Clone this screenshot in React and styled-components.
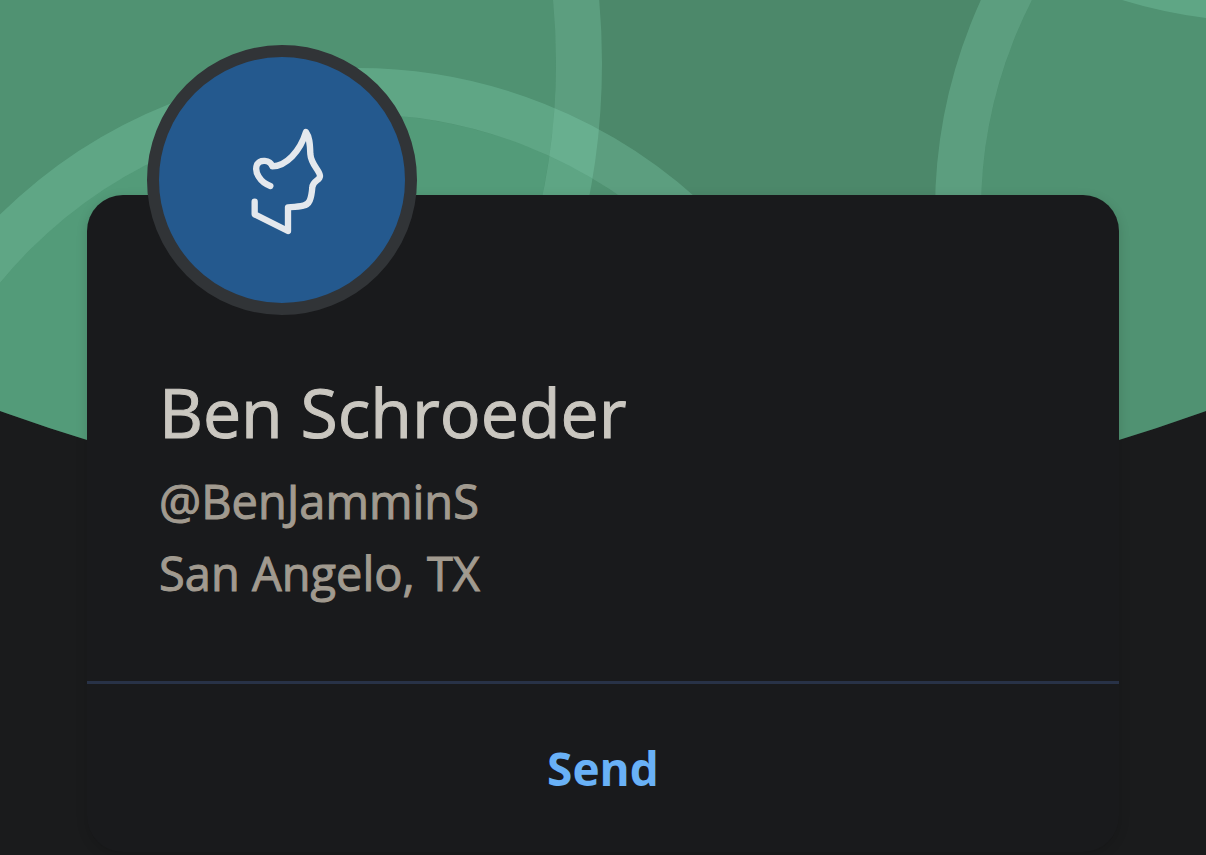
import React from "react";
import styled, { createGlobalStyle } from "styled-components";

const GlobalStyle = createGlobalStyle`
  * { box-sizing: border-box; }
  body {
    margin: 0;
    background: #1a1b1c;
    font-family: "Open Sans", "Noto Sans", sans-serif;
  }
`;

const Page = styled.main`
  display: grid;
  align-items: start;
  min-height: 100vh;
  overflow: hidden;
`;

const Cover = styled.svg`
  grid-area: 1 / 1;
  display: block;
  width: 100%;
  height: 520px;
`;

const Content = styled.div`
  grid-area: 1 / 1;
  position: relative;
  padding: 195px 87px 3px;
`;

const Card = styled.section`
  background: #191a1c;
  border-radius: 36px;
  box-shadow: 0 3px 12px rgba(0, 0, 0, 0.14);
`;

const Avatar = styled.div`
  display: flex;
  align-items: center;
  justify-content: center;
  width: 270px;
  height: 270px;
  margin: -150px 0 48px 60px;
  border: 12px solid #313437;
  border-radius: 50%;
  background: #24598e;
`;

const Details = styled.div`
  display: flow-root;
  padding-bottom: 72px;
`;

const Name = styled.h1`
  margin: 0 72px 4px;
  color: #cac7c0;
  font-size: 68px;
  font-weight: 500;
  line-height: 98px;
  -webkit-text-stroke: 1px currentColor;
`;

const Meta = styled.p`
  margin: 0 72px;
  color: #a19a8f;
  font-size: 47px;
  font-weight: 500;
  line-height: 72px;
  -webkit-text-stroke: 1px currentColor;
`;

const SendButton = styled.button`
  display: block;
  width: 100%;
  padding: 0;
  border: 0;
  border-top: 3px solid #283247;
  border-radius: 0;
  background: transparent;
  color: #69b1f6;
  font-family: inherit;
  font-size: 46px;
  font-weight: 700;
  line-height: 168px;
  cursor: pointer;
`;

const rings = [
  { cx: -98, cy: 63, r: 700 },
  { cx: 357, cy: 576, r: 508 },
  { cx: 1443, cy: 211, r: 508 },
  { cx: 1270, cy: -486, r: 508 },
];

function CoverArt() {
  return (
    <Cover viewBox="0 0 1206 520" preserveAspectRatio="xMidYMin slice" aria-hidden="true">
      <defs>
        <clipPath id="cover-curve">
          <circle cx="603" cy="-1252" r="1769" />
        </clipPath>
      </defs>
      <g clipPath="url(#cover-curve)">
        <rect x="-600" width="2400" height="520" fill="#4c886a" />
        {rings.map(({ cx, cy, r }) => (
          <g key={cx} fill="none">
            <circle cx={cx} cy={cy} r={r - 46} fill="#6edcac" fillOpacity="0.13" />
            <circle cx={cx} cy={cy} r={r - 23} stroke="#94e8c8" strokeOpacity="0.23" strokeWidth="46" />
          </g>
        ))}
      </g>
    </Cover>
  );
}

function ProfileIcon() {
  return (
    <svg
      width="130"
      height="140"
      viewBox="-9 0 390 420"
      fill="none"
      stroke="#e4e8ed"
      strokeWidth="19"
      strokeLinecap="round"
      strokeLinejoin="round"
      aria-hidden="true"
    >
      <path d="M151 228C120 217 102 186 111 164C119 148 150 148 157 169C198 168 240 125 258 66C268 80 270 98 271 132C273 164 300 182 300 198C300 212 278 212 277 232C274 268 268 284 250 287C235 291 222 291 204 292V363L104 313V275" />
    </svg>
  );
}

export default function App() {
  return (
    <>
      <GlobalStyle />
      <Page>
        <CoverArt />
        <Content>
          <Card>
            <Details>
              <Avatar>
                <ProfileIcon />
              </Avatar>
              <Name>Ben Schroeder</Name>
              <Meta>@BenJamminS</Meta>
              <Meta>San Angelo, TX</Meta>
            </Details>
            <SendButton type="button">Send</SendButton>
          </Card>
        </Content>
      </Page>
    </>
  );
}
